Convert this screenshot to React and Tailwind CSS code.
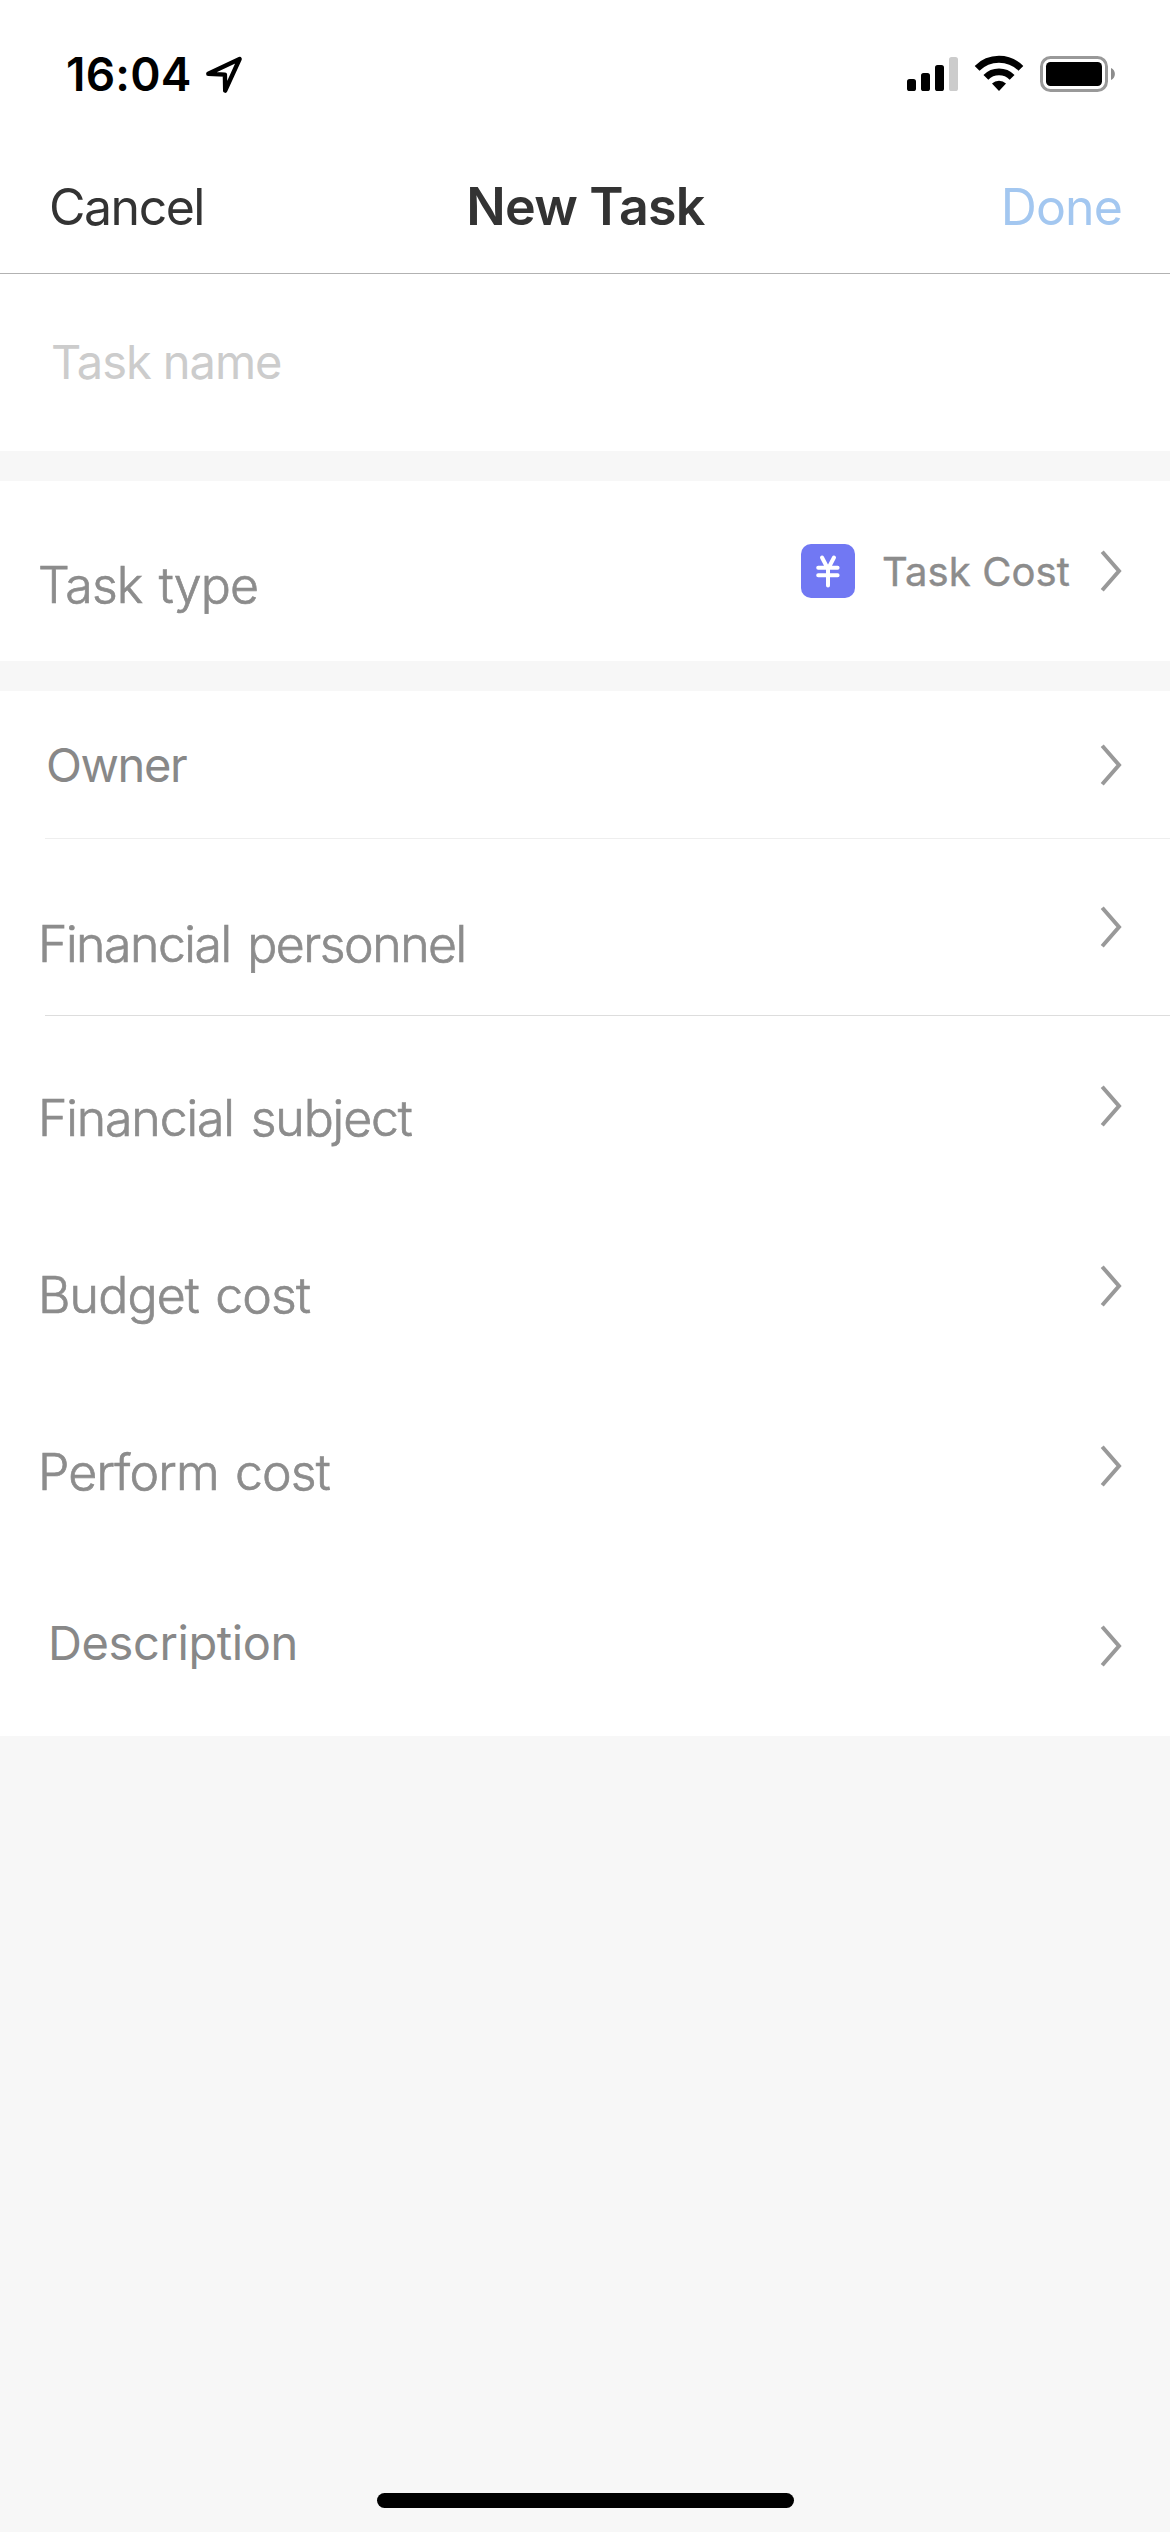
import React from "react";

function LocationArrow() {
  return (
    <svg className="w-[40px] h-[40px]" viewBox="0 0 40 40" fill="none" stroke="#000" strokeWidth="4.4" strokeLinecap="round" strokeLinejoin="round">
      <path d="M4.3 18.8 L35.6 4 L21.2 35.6 L20.9 19.6 Z" />
    </svg>
  );
}

function Signal() {
  return (
    <svg className="w-[51px] h-[34px]" viewBox="0 0 51 34">
      <rect x="0" y="22" width="9" height="12" rx="2.6" />
      <rect x="14" y="16" width="9" height="18" rx="2.6" />
      <rect x="28" y="8" width="9" height="26" rx="2.6" />
      <rect x="42" y="0" width="9" height="34" rx="2.6" fill="#ccc" />
    </svg>
  );
}

function Wifi() {
  return (
    <svg className="w-[50px] h-[37px]" viewBox="0 0 50 37" fill="none" stroke="#000" strokeWidth="6.8">
      <path d="M3.1 14.3 A31 31 0 0 1 46.9 14.3" />
      <path d="M11.9 23.4 A18.4 18.4 0 0 1 38.1 23.4" />
      <path d="M18 29.6 A10 10 0 0 1 32 29.6 L25 37 Z" fill="#000" stroke="none" />
    </svg>
  );
}

function Battery() {
  return (
    <svg className="w-[75px] h-[36px]" viewBox="0 0 75 36">
      <rect x="1.5" y="1.5" width="65" height="33" rx="9" fill="none" stroke="#999" strokeWidth="3" />
      <rect x="6" y="6" width="56" height="24" rx="4.5" />
      <path d="M71 12 C76.2 14 76.2 22 71 24 Z" fill="#8c8c8c" />
    </svg>
  );
}

function Chevron() {
  return (
    <svg className="w-[24px] h-[44px] shrink-0" viewBox="0 0 24 44" fill="none" stroke="#999" strokeWidth="4">
      <path d="M2.2 2.7 L19 22 L2.2 41.3" />
    </svg>
  );
}

function YenBadge() {
  return (
    <div className="w-[54px] h-[54px] rounded-[10px] bg-[#7178f3]">
      <svg viewBox="0 0 54 54" fill="none" stroke="#fff" strokeWidth="4" strokeLinecap="round" strokeLinejoin="round">
        <path d="M21 13.5 L27 25 L33 13.5 M27 24 V41.5 M17.2 23.8 H36.6 M17.2 31.3 H36.6" />
      </svg>
    </div>
  );
}

function Row({ label, height, labelClass, children }) {
  return (
    <div className={`flex items-start justify-between pr-[46px] ${height}`}>
      <span className={`whitespace-nowrap ${labelClass}`}>{label}</span>
      <div className="flex h-full items-center">
        {children}
        <Chevron />
      </div>
    </div>
  );
}

const light = "text-[50px] leading-[60px] font-light text-[#8c8c8c] [-webkit-text-stroke:0.7px_#8c8c8c] pl-[38px]";
const regular = "text-[47px] leading-[57px] font-normal text-[#888]";

export default function App() {
  return (
    <div className="flex h-[2532px] w-[1170px] flex-col bg-[#f7f7f7] font-['Inter','Liberation_Sans',sans-serif]">
      <header className="h-[274px] border-b border-[#b2b2b2] bg-white">
        <div className="flex h-[132px] items-start justify-between pl-[66px] pr-[55px]">
          <div className="flex items-start pt-[46px]">
            <span className="text-[46px] leading-[56px] font-semibold tracking-[0.2px] text-black">16:04</span>
            <div className="ml-[12px] mt-[9px]">
              <LocationArrow />
            </div>
          </div>
          <div className="flex items-start pt-[54px]">
            <div className="mt-[3px]">
              <Signal />
            </div>
            <div className="ml-[16px]">
              <Wifi />
            </div>
            <div className="ml-[16px] mt-[2px]">
              <Battery />
            </div>
          </div>
        </div>
        <div className="grid h-[141px] grid-cols-3 items-start pl-[49px] pr-[48px] text-[50px] leading-[60px] text-[#333]">
          <button className="justify-self-start pt-[45px] tracking-[-1.5px]">Cancel</button>
          <h1 className="justify-self-center whitespace-nowrap pt-[43px] text-[52px] leading-[63px] font-semibold tracking-[-0.8px]">New Task</h1>
          <button className="justify-self-end pt-[45px] tracking-[-0.87px] text-[#a3c7f0]">Done</button>
        </div>
      </header>

      <section className="h-[177px] bg-white pl-[51px] pt-[59px] text-[47px] leading-[57px] tracking-[-1.05px] text-[#ccc]">Task name</section>

      <section className="mt-[30px] bg-white">
        <Row label="Task type" height="h-[180px]" labelClass={`${light} pt-[74px] tracking-[-0.85px] [word-spacing:3px]`}>
          <YenBadge />
          <span className="ml-[27px] mr-[30px] text-[40px] leading-[49px] tracking-[0.1px] text-[#8c8c8c] [-webkit-text-stroke:0.4px_#8c8c8c]">Task Cost</span>
        </Row>
      </section>

      <section className="mt-[30px] bg-white">
        <Row label="Owner" height="h-[147px]" labelClass={`${regular} pl-[46px] pt-[45px] tracking-[-1.4px]`} />
        <div className="ml-[45px] h-px bg-[#eee]" />
        <Row label="Financial personnel" height="h-[176px]" labelClass={`${light} pt-[75px] tracking-[-1.5px] [word-spacing:4px]`} />
        <div className="ml-[45px] h-px bg-[#ddd]" />
        <Row label="Financial subject" height="h-[180px]" labelClass={`${light} pt-[72px] tracking-[-1.15px] [word-spacing:4px]`} />
        <Row label="Budget cost" height="h-[180px]" labelClass={`${light} pt-[69px] tracking-[-0.85px] [word-spacing:3px]`} />
        <Row label="Perform cost" height="h-[180px]" labelClass={`${light} pt-[66px] tracking-[-0.85px] [word-spacing:3px]`} />
        <Row label="Description" height="h-[180px]" labelClass={`${regular} pl-[48px] pt-[58px] tracking-[-0.4px]`} />
      </section>

      <div className="mx-auto mt-auto mb-[24px] h-[15px] w-[417px] rounded-full bg-black" />
    </div>
  );
}
